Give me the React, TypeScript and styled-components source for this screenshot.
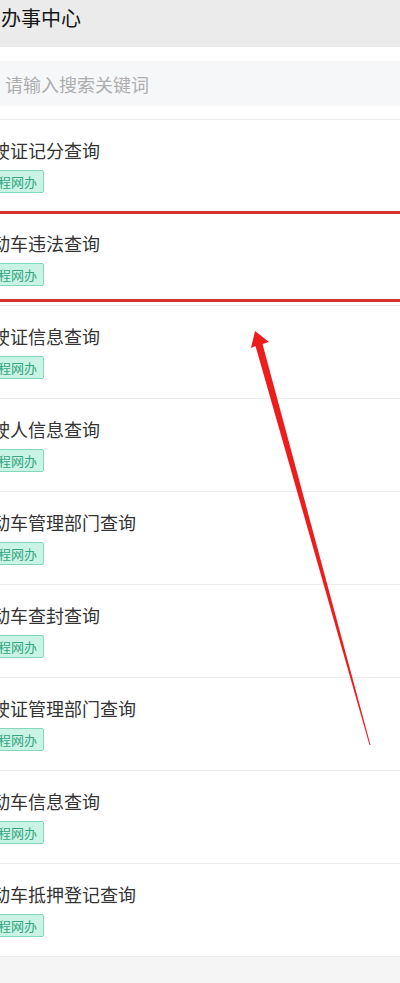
import styled, { createGlobalStyle } from 'styled-components';

const GlobalStyle = createGlobalStyle`
  html, body {
    margin: 0;
    padding: 0;
    background: #fff;
  }
  body {
    font-family: "Noto Sans CJK SC", "Noto Sans", sans-serif;
  }
`;

const Page = styled.div`
  position: relative;
  width: 400px;
  height: 983px;
  overflow: hidden;
  background: #fff;
`;

const Header = styled.div`
  height: 47px;
  background: #ebebeb;
  padding-left: 1px;
  font-size: 20px;
  line-height: 36px;
  color: #151515;
`;

const SearchBar = styled.div`
  margin: 14px 0 13px;
  height: 45px;
  background: #f6f7f9;
  display: flex;
  align-items: center;
  padding-left: 5px;
  font-size: 18px;
  color: #aeaeae;
`;

const List = styled.div`
  border-top: 1px solid #ededed;
`;

const Item = styled.div<{ $marked?: boolean }>`
  position: relative;
  box-sizing: border-box;
  height: 93px;
  border-bottom: 1px solid #ececec;
  padding-top: 18px;
  &::after {
    content: '';
    display: ${p => (p.$marked ? 'block' : 'none')};
    position: absolute;
    top: -2px;
    left: -10px;
    right: -10px;
    height: 85px;
    border: 3px solid #d8322c;
  }
`;

const ItemBody = styled.div`
  margin-left: -26px;
`;

const Title = styled.div`
  font-size: 18px;
  line-height: 24px;
  color: #333;
  white-space: nowrap;
`;

const Tag = styled.span`
  display: inline-block;
  margin: 8px 0 0 4px;
  padding: 0 6px;
  height: 23px;
  box-sizing: border-box;
  line-height: 21px;
  font-size: 13px;
  color: #37a57f;
  background: #c8f3e5;
  border: 1px solid #86d6bb;
  border-radius: 2px;
`;

const Footer = styled.div`
  height: 26px;
  background: #f5f5f5;
`;

const Arrow = styled.svg`
  position: absolute;
  top: 0;
  left: 0;
  pointer-events: none;
`;

const items = [
  '驾驶证记分查询',
  '机动车违法查询',
  '驾驶证信息查询',
  '驾驶人信息查询',
  '机动车管理部门查询',
  '机动车查封查询',
  '驾驶证管理部门查询',
  '机动车信息查询',
  '机动车抵押登记查询',
];

export default function App() {
  return (
    <Page>
      <GlobalStyle />
      <Header>办事中心</Header>
      <SearchBar>请输入搜索关键词</SearchBar>
      <List>
        {items.map((name, i) => (
          <Item key={name} $marked={i === 1}>
            <ItemBody>
              <Title>{name}</Title>
              <Tag>全程网办</Tag>
            </ItemBody>
          </Item>
        ))}
      </List>
      <Footer />
      <Arrow width="400" height="983" viewBox="0 0 400 983">
        <polygon
          points="255,331 269,342 262.5,344 370.5,745 369.5,745 255.5,346 251,348"
          fill="#ee1d1d"
        />
      </Arrow>
    </Page>
  );
}
